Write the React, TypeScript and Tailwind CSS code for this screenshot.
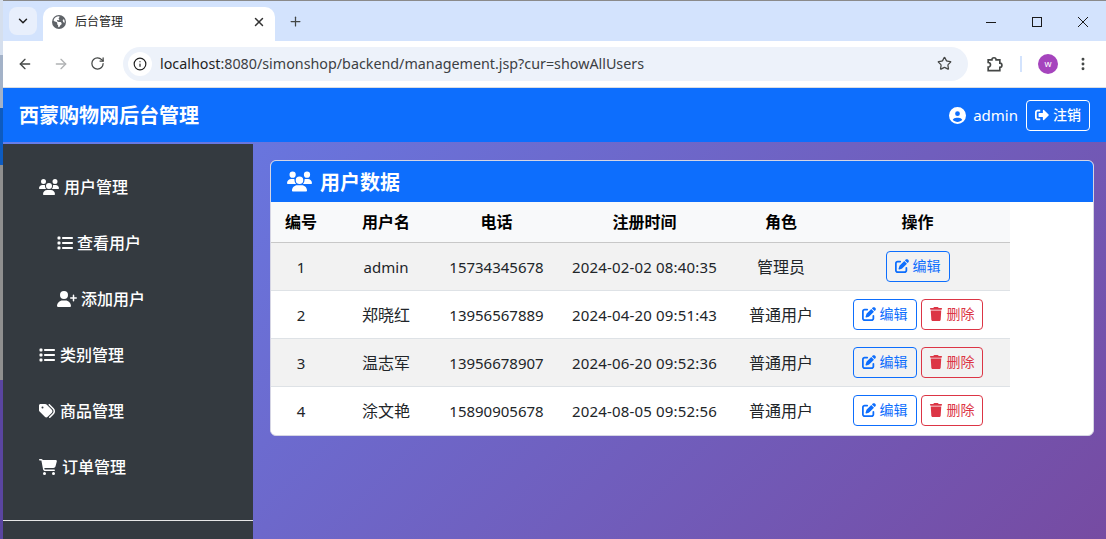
import { ArrowLeft, ArrowRight, ChevronDown, Info, MoreVertical, Plus, RotateCw, Star, X } from 'lucide-react'
import { FaSignOutAlt } from 'react-icons/fa'
import { FaCartShopping, FaCircleUser, FaEarthAmericas, FaList, FaPenToSquare, FaTags, FaTrash, FaUserPlus, FaUsers } from 'react-icons/fa6'

const users = [
  { id: 1, name: 'admin', tel: '15734345678', time: '2024-02-02 08:40:35', role: '管理员' },
  { id: 2, name: '郑晓红', tel: '13956567889', time: '2024-04-20 09:51:43', role: '普通用户' },
  { id: 3, name: '温志军', tel: '13956678907', time: '2024-06-20 09:52:36', role: '普通用户' },
  { id: 4, name: '涂文艳', tel: '15890905678', time: '2024-08-05 09:52:56', role: '普通用户' },
]

function ChromeBar() {
  return (
    <div className="shrink-0 border-t border-[#8a8a8a]">
      {/* tab strip */}
      <div className="flex h-10 items-end bg-[#d3e3fd] pl-[6px]">
        <div className="mb-[6px] flex h-7 w-7 items-center justify-center rounded-lg bg-[#e8effc] text-[#1f1f1f]">
          <ChevronDown size={14} strokeWidth={2.5} />
        </div>
        <div className="ml-[6px] flex h-[34px] w-[232px] items-center rounded-t-[10px] bg-white pb-[5px] pl-[9px] pr-[9px]">
          <FaEarthAmericas size={14} className="text-[#5f6368]" />
          <span className="ml-[9px] flex-1 text-xs text-[#1f1f1f]">后台管理</span>
          <X size={14} strokeWidth={2.5} className="text-[#333]" />
        </div>
        <div className="mb-[12px] ml-[13px] text-[#444746]">
          <Plus size={15} strokeWidth={2} />
        </div>
        {/* window controls */}
        <div className="mb-[14px] ml-auto flex items-center gap-9 pr-[18px] text-[#1a1a1a]">
          <svg width="10" height="10" viewBox="0 0 10 10" fill="none" stroke="currentColor" strokeWidth="1">
            <path d="M0 5.5h10" />
          </svg>
          <svg width="10" height="10" viewBox="0 0 10 10" fill="none" stroke="currentColor" strokeWidth="1">
            <rect x="0.5" y="0.5" width="9" height="9" />
          </svg>
          <svg width="10" height="10" viewBox="0 0 10 10" fill="none" stroke="currentColor" strokeWidth="1">
            <path d="M0 0l10 10M10 0L0 10" />
          </svg>
        </div>
      </div>
      {/* toolbar */}
      <div className="flex h-[47px] items-center rounded-tr-lg border-b border-[#d9dde3] bg-white pb-[1px] text-[#444746]">
        <ArrowLeft size={16} className="ml-[14px]" />
        <ArrowRight size={16} className="ml-[20px] text-[#b0b2b4]" />
        <RotateCw size={15} className="ml-[21px]" />
        <div className="ml-[18px] flex h-[34px] w-[845px] items-center rounded-full bg-[#edf2fa] pl-[5px] pr-[16px]">
          <div className="flex h-6 w-6 items-center justify-center rounded-full bg-white">
            <Info size={14} strokeWidth={2} className="text-[#1f1f1f]" />
          </div>
          <span className="ml-[8px] flex-1 text-[14.3px] text-[#3c4043]">
            <span className="text-[#1f1f1f]">localhost</span>:8080/simonshop/backend/management.jsp?cur=showAllUsers
          </span>
          <Star size={15} strokeWidth={2} />
        </div>
        <svg width="20" height="20" viewBox="0 0 24 24" fill="none" stroke="currentColor" strokeWidth="2" className="ml-[16px]">
          <path d="M5 7h4.5a2.5 2.5 0 0 1 5 0H19v4a2.5 2.5 0 0 1 0 5v4H5v-4.2a2.8 2.8 0 0 0 0-5.6Z" />
        </svg>
        <div className="ml-[16px] h-4 w-[2px] bg-[#d3e3fd]" />
        <div className="ml-[16px] flex h-5 w-5 items-center justify-center rounded-full bg-[#a544bd] text-[9px] text-white">w</div>
        <MoreVertical size={16} strokeWidth={2.4} className="ml-[17px]" />
      </div>
    </div>
  )
}

function NavBar() {
  return (
    <div className="flex h-[54px] shrink-0 items-center justify-between bg-[#0d6efd] pl-[16px] pr-[16px] text-white">
      <span className="pt-[2px] text-xl font-bold">西蒙购物网后台管理</span>
      <div className="flex items-center">
        <FaCircleUser size={17} />
        <span className="ml-[7px] text-[15px]">admin</span>
        <button className="ml-2 flex h-[31px] w-16 items-center justify-center gap-1 rounded border border-white text-sm font-medium">
          <FaSignOutAlt size={14} />
          注销
        </button>
      </div>
    </div>
  )
}

function Sidebar() {
  const itemCls = 'flex h-14 items-center text-base font-medium'
  return (
    <aside className="mt-[2px] flex w-[250px] shrink-0 flex-col bg-[#343a40] pt-[15px] text-white">
      <div className={`${itemCls} pl-[36px] gap-[5px]`}><FaUsers size={20} />用户管理</div>
      <div className={`${itemCls} pl-[54px] gap-[4px]`}><FaList size={16} />查看用户</div>
      <div className={`${itemCls} pl-[54px] gap-[4px]`}><FaUserPlus size={20} />添加用户</div>
      <div className={`${itemCls} pl-[36px] gap-[5px]`}><FaList size={16} />类别管理</div>
      <div className={`${itemCls} pl-[36px] gap-[5px]`}><FaTags size={16} />商品管理</div>
      <div className={`${itemCls} pl-[36px] gap-[5px]`}><FaCartShopping size={18} />订单管理</div>
      <div className="mt-[25px] border-t border-[#e6e6e6]" />
    </aside>
  )
}

function OutlineBtn({ kind }: { kind: 'edit' | 'del' }) {
  if (kind === 'edit') {
    return (
      <button className="inline-flex h-[31px] w-16 items-center justify-center gap-1 rounded border border-[#0d6efd] text-sm text-[#0d6efd]">
        <FaPenToSquare size={14} />
        编辑
      </button>
    )
  }
  return (
    <button className="inline-flex h-[31px] w-[62px] items-center justify-center gap-1 rounded border border-[#dc3545] text-sm text-[#dc3545]">
      <FaTrash size={14} />
      删除
    </button>
  )
}

function UserTable() {
  return (
    <section className="ml-[17px] mt-[18px] h-[276px] w-[824px] overflow-hidden rounded-md border border-[#d5d5e4] bg-white">
      <div className="flex h-[41px] items-center gap-[8px] bg-[#0d6efd] pl-[16px] text-xl font-semibold text-white">
        <FaUsers size={25} />
        <span className="pt-[2px]">用户数据</span>
      </div>
      <table className="w-[739px] table-fixed border-collapse text-center text-[15px] text-[#212529]">
        <colgroup>
          <col className="w-[60px]" />
          <col className="w-[110px]" />
          <col className="w-[111px]" />
          <col className="w-[185px]" />
          <col className="w-[88px]" />
          <col className="w-[185px]" />
        </colgroup>
        <thead>
          <tr className="h-10 border-b border-[#c8c8c8] bg-[#f8f9fa] text-base font-bold text-black">
            <th>编号</th>
            <th>用户名</th>
            <th>电话</th>
            <th>注册时间</th>
            <th>角色</th>
            <th>操作</th>
          </tr>
        </thead>
        <tbody>
          {users.map((u, i) => (
            <tr key={u.id} className={`h-12 ${i < 3 ? 'border-b border-[#dee2e6]' : ''} ${i % 2 === 0 ? 'bg-[#f2f2f2]' : 'bg-white'}`}>
              <td className="pt-[2px]">{u.id}</td>
              <td className={i > 0 ? 'pt-[2px] text-base' : 'pt-[2px]'}>{u.name}</td>
              <td className="pt-[2px]">{u.tel}</td>
              <td className="pt-[2px] tracking-[0.16px]">{u.time}</td>
              <td className="pt-[2px] text-base">{u.role}</td>
              <td>
                <div className="flex justify-center gap-1">
                  <OutlineBtn kind="edit" />
                  {i > 0 && <OutlineBtn kind="del" />}
                </div>
              </td>
            </tr>
          ))}
        </tbody>
      </table>
    </section>
  )
}

export default function App() {
  return (
    <div className="flex h-[539px] w-[1106px] overflow-hidden font-['Noto_Sans','Noto_Sans_CJK_SC',sans-serif]">
      {/* sliver of the desktop behind the window */}
      <div className="flex w-[3px] shrink-0 flex-col">
        <div className="h-[55px] bg-[#d5dfee]" />
        <div className="h-[53px] bg-[#a3b2c8]" />
        <div className="h-[57px] bg-[#0d5bc0]" />
        <div className="h-[215px] bg-[#8f8f8f]" />
        <div className="flex-1 bg-[#5a45a0]" />
      </div>
      <div className="flex min-w-0 flex-1 flex-col">
        <ChromeBar />
        <NavBar />
        <div className="flex min-h-0 flex-1 bg-[linear-gradient(135deg,#667eea,#764ba2)]">
          <Sidebar />
          <UserTable />
        </div>
      </div>
    </div>
  )
}
